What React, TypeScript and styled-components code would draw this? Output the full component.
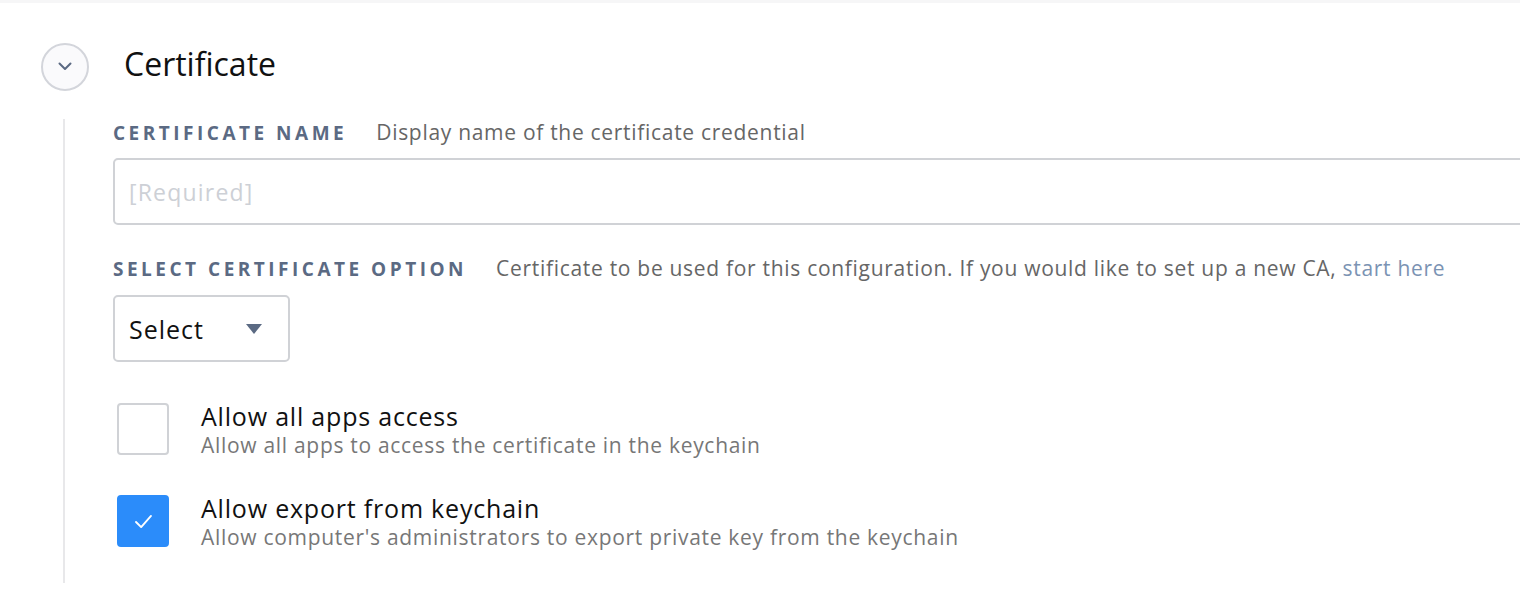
import styled, { createGlobalStyle } from "styled-components";

const GlobalStyle = createGlobalStyle`
  body {
    margin: 0;
    background: #ffffff;
    font-family: "Open Sans", Lato, sans-serif;
    color: #111;
  }
`;

const Page = styled.div`
  width: 1520px;
  height: 616px;
  overflow: hidden;
  border-top: 3px solid #f6f6f7;
  box-sizing: border-box;
`;

const Header = styled.div`
  display: flex;
  align-items: center;
  gap: 35px;
  padding: 39px 0 0 41px;
`;

const Toggle = styled.button`
  width: 48px;
  height: 48px;
  border-radius: 50%;
  border: 2px solid #d3d5db;
  background: #fafafc;
  display: flex;
  align-items: center;
  justify-content: center;
  padding: 0;
`;

const Title = styled.h2`
  margin: 0 0 6px;
  font-size: 32px;
  font-weight: 400;
  color: #111;
`;

const Body = styled.div`
  margin: 28px 0 0 63px;
  padding: 0 0 30px 48px;
  border-left: 2px solid #e8e8ea;
  display: flex;
  flex-direction: column;
`;

const FieldHead = styled.div<{ top: number }>`
  display: flex;
  align-items: baseline;
  gap: 29px;
  margin-top: ${(p) => p.top}px;
  height: 26px;
  line-height: 26px;
  white-space: nowrap;
`;

const Label = styled.span`
  font-size: 19px;
  font-weight: 700;
  letter-spacing: 3.5px;
  text-transform: uppercase;
  color: #5b6a83;
`;

const Hint = styled.span`
  font-size: 21px;
  letter-spacing: 0.7px;
  color: #666;
`;

const Link = styled.a`
  color: #7b93b3;
  text-decoration: none;
`;

const TextInput = styled.input`
  margin-top: 13px;
  width: 1460px;
  height: 67px;
  box-sizing: border-box;
  border: 2px solid #d0d2d6;
  border-radius: 5px;
  padding: 0 14px;
  font-family: inherit;
  font-size: 23px;
  letter-spacing: 1.2px;
  &::placeholder {
    color: #cdd0d6;
  }
`;

const SelectBox = styled.div`
  margin-top: 14px;
  width: 177px;
  height: 67px;
  box-sizing: border-box;
  border: 2px solid #d0d2d6;
  border-radius: 5px;
  display: flex;
  align-items: center;
  justify-content: space-between;
  padding: 0 26px 0 14px;
  font-size: 25px;
  letter-spacing: 1px;
  color: #111;
`;

const Caret = styled.span`
  width: 0;
  height: 0;
  border-left: 8px solid transparent;
  border-right: 8px solid transparent;
  border-top: 10px solid #5b6a83;
`;

const CheckRow = styled.label<{ top: number }>`
  display: flex;
  gap: 32px;
  margin-top: ${(p) => p.top}px;
  margin-left: 4px;
`;

const Box = styled.span<{ checked?: boolean }>`
  flex: none;
  width: 52px;
  height: 52px;
  box-sizing: border-box;
  border-radius: 4px;
  border: 2px solid ${(p) => (p.checked ? "#2b8cfa" : "#d0d2d6")};
  background: ${(p) => (p.checked ? "#2b8cfa" : "#fff")};
  display: flex;
  align-items: center;
  justify-content: center;
`;

const CheckText = styled.div`
  display: flex;
  flex-direction: column;
  white-space: nowrap;
`;

const CheckTitle = styled.span`
  font-size: 25px;
  line-height: 26px;
  letter-spacing: 0.8px;
  color: #111;
`;

const CheckSub = styled.span`
  font-size: 21px;
  line-height: 32px;
  letter-spacing: 0.7px;
  color: #777;
`;

export default function App() {
  return (
    <Page>
      <GlobalStyle />
      <Header>
        <Toggle>
          <svg width="14" height="9" viewBox="0 0 14 9" fill="none">
            <path d="M1.5 1.5 L7 7 L12.5 1.5" stroke="#5b6a83" strokeWidth="2" strokeLinecap="round" strokeLinejoin="round" />
          </svg>
        </Toggle>
        <Title>Certificate</Title>
      </Header>
      <Body>
        <FieldHead top={0}>
          <Label>Certificate Name</Label>
          <Hint>Display name of the certificate credential</Hint>
        </FieldHead>
        <TextInput placeholder="[Required]" />
        <FieldHead top={30}>
          <Label>Select Certificate Option</Label>
          <Hint>
            Certificate to be used for this configuration. If you would like to set up a new CA, <Link>start here</Link>
          </Hint>
        </FieldHead>
        <SelectBox>
          Select
          <Caret />
        </SelectBox>
        <CheckRow top={41}>
          <Box />
          <CheckText>
            <CheckTitle>Allow all apps access</CheckTitle>
            <CheckSub>Allow all apps to access the certificate in the keychain</CheckSub>
          </CheckText>
        </CheckRow>
        <CheckRow top={34}>
          <Box checked>
            <svg width="19" height="15" viewBox="0 0 20 16" fill="none">
              <path d="M2 8.5 L7.5 14 L18 2" stroke="#fff" strokeWidth="2" strokeLinecap="round" strokeLinejoin="round" />
            </svg>
          </Box>
          <CheckText>
            <CheckTitle>Allow export from keychain</CheckTitle>
            <CheckSub>Allow computer's administrators to export private key from the keychain</CheckSub>
          </CheckText>
        </CheckRow>
      </Body>
    </Page>
  );
}
